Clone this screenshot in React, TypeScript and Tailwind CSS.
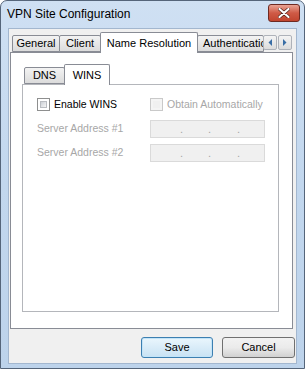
import React from 'react';

const font = { fontFamily: '"Liberation Sans", Arial, sans-serif' };

function Tab({ label, selected, className = '' }: { label: string; selected?: boolean; className?: string }) {
  return (
    <div
      className={`flex items-center justify-center whitespace-nowrap overflow-hidden border border-[#898c95] rounded-t-[2px] text-[11px] text-black ${
        selected
          ? 'relative z-10 h-[21px] -mb-px border-b-0 bg-white'
          : 'h-[17px] bg-gradient-to-b from-[#f3f3f3] to-[#dcdcdc]'
      } ${className}`}
    >
      {label}
    </div>
  );
}

function Checkbox({ disabled }: { disabled?: boolean }) {
  return (
    <div
      className={`w-[13px] h-[13px] border ${
        disabled ? 'border-[#c9c9c9] bg-[#f4f4f4]' : 'border-[#8e8f8f] bg-white'
      } p-[2px]`}
    >
      <div
        className={`w-full h-full ${
          disabled ? 'bg-[#f0f0f0]' : 'bg-gradient-to-br from-[#cbcfd5] to-[#f6f6f6] border border-[#b9bcc1]'
        }`}
      />
    </div>
  );
}

function IpBox() {
  return (
    <div className="w-[115px] h-[18px] border border-[#dadada] bg-[#f0f0f0] flex items-center text-[11px] text-[#a6a6a6] leading-none">
      <span className="w-[29px]" />
      <span className="w-[28px]">.</span>
      <span className="w-[29px]">.</span>
      <span>.</span>
    </div>
  );
}

function ArrowButton({ dir }: { dir: 'left' | 'right' }) {
  return (
    <div className="w-[14px] h-[15px] border border-[#aeb2b9] rounded-[2px] bg-gradient-to-b from-[#f4f4f4] to-[#dcdcdc] flex items-center justify-center">
      <svg width="4" height="7" viewBox="0 0 4 7">
        {dir === 'left' ? (
          <polygon points="4,0 4,7 0.5,3.5" fill="#3a6ea5" />
        ) : (
          <polygon points="0,0 0,7 3.5,3.5" fill="#3a6ea5" />
        )}
      </svg>
    </div>
  );
}

export default function App() {
  return (
    <div style={font} className="w-[305px] h-[369px] overflow-hidden">
      <div className="w-[305px] h-[369px] border border-[#55657a] rounded-t-[7px] bg-gradient-to-b from-[#cfe0f3] via-[#c2d7ee] to-[#bdd3eb] flex flex-col">
        {/* title bar */}
        <div className="h-[27px] flex items-start">
          <div className="pl-[6px] pt-[6px] text-[12px] text-black leading-[14px] flex-1">VPN Site Configuration</div>
          <div className="mt-[3px] mr-[4px] w-[32px] h-[18px] rounded-[3px] border border-[#6e2a22] bg-gradient-to-b from-[#e8a394] via-[#cf5a46] to-[#c1452f] flex items-center justify-center">
            <svg width="12" height="10" viewBox="0 0 12 10">
              <path d="M1.5 1 L10.5 9 M10.5 1 L1.5 9" stroke="#4a1f18" strokeWidth="3.4" strokeLinecap="round" />
              <path d="M1.5 1 L10.5 9 M10.5 1 L1.5 9" stroke="#ffffff" strokeWidth="2.2" strokeLinecap="round" />
            </svg>
          </div>
        </div>

        {/* client area */}
        <div className="ml-[7px] w-[289px] h-[336px] bg-[#f0f0f0] border border-[#a3b7cf] flex flex-col">
          {/* tab control */}
          <div className="ml-[1px] mt-[3px] w-[283px] flex flex-col">
            <div className="h-[20px] flex items-end pl-[2px]">
              <Tab label="General" className="w-[48px]" />
              <Tab label="Client" className="w-[42px] -ml-px" />
              <Tab label="Name Resolution" selected className="w-[98px] -ml-px" />
              <Tab label="Authenticatic" className="w-[67px] -ml-px justify-start pl-[5px]" />
              <div className="flex gap-[1px] mb-[2px] ml-[-1px]">
                <ArrowButton dir="left" />
                <ArrowButton dir="right" />
              </div>
            </div>
            <div className="h-[277px] border border-[#898c95] bg-white pl-[11px] pt-[11px]">
              {/* inner tab control */}
              <div className="w-[257px] flex flex-col">
                <div className="h-[20px] flex items-end pl-[2px]">
                  <Tab label="DNS" className="w-[41px]" />
                  <Tab label="WINS" selected className="w-[46px] -ml-px" />
                </div>
                <div className="h-[228px] border border-[#b4b6bb] bg-white pl-[14px] pt-[13px] text-[10.5px]">
                  <div className="flex items-center h-[13px]">
                    <div className="w-[113px] flex items-center">
                      <Checkbox />
                      <span className="ml-[4px] text-black">Enable WINS</span>
                    </div>
                    <Checkbox disabled />
                    <span className="ml-[4px] text-[#a7a7a7]">Obtain Automatically</span>
                  </div>
                  <div className="flex items-center mt-[9px]">
                    <span className="w-[113px] text-[#a7a7a7]">Server Address #1</span>
                    <IpBox />
                  </div>
                  <div className="flex items-center mt-[6px]">
                    <span className="w-[113px] text-[#a7a7a7]">Server Address #2</span>
                    <IpBox />
                  </div>
                </div>
              </div>
            </div>
          </div>

          {/* buttons */}
          <div className="flex justify-end gap-[9px] mt-[8px] pr-[1px]">
            <button className="w-[72px] h-[21px] rounded-[3px] border border-[#3c7fb1] bg-gradient-to-b from-[#eaf6fd] to-[#c8e2f3] text-[11px] text-black shadow-[inset_0_0_0_1px_#c3e4f8]">
              Save
            </button>
            <button className="w-[73px] h-[21px] rounded-[3px] border border-[#707070] bg-gradient-to-b from-[#f2f2f2] via-[#ebebeb] to-[#d1d1d1] text-[11px] text-black">
              Cancel
            </button>
          </div>
        </div>
      </div>
    </div>
  );
}
